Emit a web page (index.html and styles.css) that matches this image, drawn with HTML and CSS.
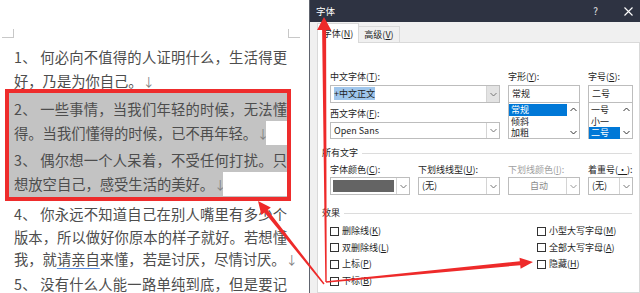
FILE: index.html
```html
<!DOCTYPE html>
<html lang="zh-CN">
<head>
    <meta charset="UTF-8">
    <meta name="viewport" content="width=device-width, initial-scale=1.0">
    <title>字体</title>
    <link rel="stylesheet" href="styles.css">
</head>
<body>
    <!-- документ слева -->
    <div class="doc">
        <div class="marks"><span class="mark-l"></span><span class="mark-r"></span></div>
        <p class="p1">1、 何必向不值得的人证明什么，生活得更好，乃是为你自己。<span class="pm">↓</span></p>
        <div class="sel">
            <p>2、 一些事情，当我们年轻的时候，无法懂得。当我们懂得的时候，已不再年轻。<span class="pm">↓</span><span class="eol"></span></p>
            <p class="p3">3、 偶尔想一个人呆着，不受任何打扰。只想放空自己，感受生活的美好。<span class="pm">↓</span><span class="eol"></span></p>
        </div>
        <p class="p4">4、 你永远不知道自己在别人嘴里有多少个版本，所以做好你原本的样子就好。若想懂我，就<span class="spell">请亲自</span>来懂，若是讨厌，尽情讨厌。<span class="pm">↓</span></p>
        <p class="p5">5、 没有什么人能一路单纯到底，但是要记</p>
    </div>

    <!-- диалог шрифта -->
    <div class="dialog">
        <div class="titlebar">
            <span class="title">字体</span>
            <span class="tbtn">?</span>
            <span class="tbtn close">
                <svg width="9" height="9" viewBox="0 0 9 9"><path d="M0.5 0.5L8.5 8.5M8.5 0.5L0.5 8.5" stroke="#fff" stroke-width="1.1"/></svg>
            </span>
        </div>
        <div class="tabs">
            <span class="tab active">字体(<u>N</u>)</span>
            <span class="tab">高级(<u>V</u>)</span>
        </div>
        <div class="panel">
            <div class="fontgrid">
                <div class="col">
                    <div class="lbl">中文字体(<u>T</u>):</div>
                    <div class="combo focus">
                        <span class="val"><span class="hl">+中文正文</span></span>
                        <span class="arr"><svg width="7" height="5" viewBox="0 0 7 5"><polyline points="0.5,1 3.5,4 6.5,1" fill="none" stroke="#777" stroke-width="1"/></svg></span>
                    </div>
                    <div class="lbl lbl2">西文字体(<u>F</u>):</div>
                    <div class="combo short">
                        <span class="val">Open Sans</span>
                        <span class="arr"><svg width="7" height="5" viewBox="0 0 7 5"><polyline points="0.5,1 3.5,4 6.5,1" fill="none" stroke="#777" stroke-width="1"/></svg></span>
                    </div>
                </div>
                <div class="col">
                    <div class="lbl">字形(<u>Y</u>):</div>
                    <div class="input">常规</div>
                    <div class="list">
                        <div class="items">
                            <div class="item on">常规</div>
                            <div class="item">倾斜</div>
                            <div class="item">加粗</div>
                        </div>
                        <div class="sbar">
                            <svg width="7" height="5" viewBox="0 0 7 5"><polyline points="0.5,4 3.5,1 6.5,4" fill="none" stroke="#333" stroke-width="1"/></svg>
                            <svg width="7" height="5" viewBox="0 0 7 5"><polyline points="0.5,1 3.5,4 6.5,1" fill="none" stroke="#333" stroke-width="1"/></svg>
                        </div>
                    </div>
                </div>
                <div class="col">
                    <div class="lbl">字号(<u>S</u>):</div>
                    <div class="input">二号</div>
                    <div class="list">
                        <div class="items">
                            <div class="item">一号</div>
                            <div class="item">小一</div>
                            <div class="item on">二号</div>
                        </div>
                        <div class="sbar">
                            <svg width="7" height="5" viewBox="0 0 7 5"><polyline points="0.5,4 3.5,1 6.5,4" fill="none" stroke="#333" stroke-width="1"/></svg>
                            <svg width="7" height="5" viewBox="0 0 7 5"><polyline points="0.5,1 3.5,4 6.5,1" fill="none" stroke="#333" stroke-width="1"/></svg>
                        </div>
                    </div>
                </div>
            </div>

            <div class="group">所有文字</div>
            <div class="attrs">
                <div class="lbl">字体颜色(<u>C</u>):</div>
                <div class="lbl">下划线线型(<u>U</u>):</div>
                <div class="lbl off">下划线颜色(<u>I</u>):</div>
                <div class="lbl">着重号(<u>·</u>):</div>
                <div class="combo">
                    <span class="swatch"></span>
                    <span class="arr"><svg width="7" height="5" viewBox="0 0 7 5"><polyline points="0.5,1 3.5,4 6.5,1" fill="none" stroke="#777" stroke-width="1"/></svg></span>
                </div>
                <div class="combo">
                    <span class="val">(无)</span>
                    <span class="arr"><svg width="7" height="5" viewBox="0 0 7 5"><polyline points="0.5,1 3.5,4 6.5,1" fill="none" stroke="#777" stroke-width="1"/></svg></span>
                </div>
                <div class="combo disabled">
                    <span class="val">自动</span>
                    <span class="arr"><svg width="7" height="5" viewBox="0 0 7 5"><polyline points="0.5,1 3.5,4 6.5,1" fill="none" stroke="#999" stroke-width="1"/></svg></span>
                </div>
                <div class="combo">
                    <span class="val">(无)</span>
                    <span class="arr"><svg width="7" height="5" viewBox="0 0 7 5"><polyline points="0.5,1 3.5,4 6.5,1" fill="none" stroke="#777" stroke-width="1"/></svg></span>
                </div>
            </div>

            <div class="group effects-title">效果</div>
            <div class="effects">
                <label class="chk"><span class="box"></span>删除线(<u>K</u>)</label>
                <label class="chk"><span class="box"></span>双删除线(<u>L</u>)</label>
                <label class="chk"><span class="box"></span>上标(<u>P</u>)</label>
                <label class="chk"><span class="box"></span>下标(<u>B</u>)</label>
                <label class="chk"><span class="box"></span>小型大写字母(<u>M</u>)</label>
                <label class="chk"><span class="box"></span>全部大写字母(<u>A</u>)</label>
                <label class="chk"><span class="box"></span>隐藏(<u>H</u>)</label>
            </div>
        </div>
    </div>

    <!-- красные стрелки поверх -->
    <svg class="arrows" width="640" height="293" viewBox="0 0 640 293">
        <polygon points="326.7,282 326.1,30 331.1,30 324,17 317.1,30 322.1,30 325.3,282" fill="#ee2a2a"/>
        <polygon points="325.93,281.3 519.87,261.26 519.53,257.78 533,262 520.59,268.72 520.25,265.24 326.07,282.7" fill="#ee2a2a"/>
        <polygon points="324.55,283.56 267.67,209.93 270.8,207.44 258,201 261.4,214.92 264.53,212.43 323.45,284.44" fill="#ee2a2a"/>
    </svg>
</body>
</html>
```

FILE: styles.css
```css
body {
    margin: 0;
    width: 640px;
    height: 293px;
    overflow: hidden;
    display: flex;
    position: relative;
    background-color: #fff;
    font-family: "Noto Sans CJK SC", "Noto Sans", sans-serif;
}

/* document */

.doc {
    width: 309px;
    height: 293px;
    flex: none;
    box-sizing: border-box;
    padding: 0 22px 0 14px;
    overflow: hidden;
    color: #4d4d4d;
    font-size: 14.3px;
    line-height: 24px;
}

.marks {
    display: flex;
    justify-content: space-between;
    margin: 29px -13px 0 -12px;
}

.mark-l, .mark-r {
    width: 11px;
    height: 8px;
    border-bottom: 1px solid #c8c8c8;
}

.mark-l {
    border-right: 1px solid #c8c8c8;
}

.mark-r {
    border-left: 1px solid #c8c8c8;
}

.doc p {
    margin: 0;
    text-align: justify;
}

.doc .p1 {
    margin-top: 7px;
}

.pm {
    display: inline-block;
    width: 9px;
    margin-right: -9px;
    font-size: 12px;
    color: #808080;
}

.sel {
    margin: -5px -4px 0 -9px;
    padding: 4px 0 0 5px;
    border: 4px solid #ee2c2c;
    background-color: #c3c3c3;
}

.sel p {
    overflow: hidden;
}

.sel .pm {
    margin-right: 0;
}

.sel .p3 {
    margin-top: 2px;
}

.eol {
    display: inline-block;
    width: 300px;
    height: 24px;
    margin-right: -300px;
    vertical-align: top;
    background-color: #fff;
}

.doc .p4 {
    margin-top: 2px;
    line-height: 22.5px;
}

.doc .p5 {
    margin-top: 0;
    text-align-last: justify;
}

.spell {
    text-decoration: underline;
    text-decoration-color: #5b8ad6;
    text-underline-offset: 3px;
}

/* dialog */

.dialog {
    flex: none;
    width: 331px;
    box-sizing: border-box;
    display: flex;
    flex-direction: column;
    overflow: hidden;
    background-color: #f0f0f0;
    border-left: 1px solid #60646e;
    color: #1e1e1e;
    font-size: 9px;
    line-height: 14px;
}

.titlebar {
    height: 22px;
    flex: none;
    display: flex;
    align-items: center;
    padding-left: 6px;
    margin-right: -5px;
    background-color: #2e3342;
    color: #fff;
    font-size: 9.5px;
}

.title {
    flex: 1;
}

.tbtn {
    width: 33px;
    height: 22px;
    display: flex;
    align-items: center;
    justify-content: center;
    font-size: 10px;
    color: #e8e8e8;
}

.tabs {
    height: 20px;
    flex: none;
    display: flex;
    align-items: flex-end;
    padding-left: 7px;
}

.tab {
    width: 41px;
    height: 16px;
    box-sizing: border-box;
    text-align: center;
    border: 1px solid #d9d9d9;
    border-bottom: none;
    border-left: none;
    line-height: 15px;
}

.tab.active {
    width: 42px;
    height: 20px;
    margin-bottom: -1px;
    border-left: 1px solid #d9d9d9;
    background-color: #fff;
    line-height: 20px;
    position: relative;
}

.panel {
    flex: 1;
    margin-left: 7px;
    padding: 27px 0 0 4px;
    background-color: #fff;
    border: 1px solid #d9d9d9;
}

.fontgrid {
    display: grid;
    grid-template-columns: 170px 72px 45px;
    column-gap: 8px;
    margin-left: 8px;
}

.col {
    display: flex;
    flex-direction: column;
}

.lbl {
    height: 14px;
    margin-bottom: 1px;
    white-space: nowrap;
}

.lbl2 {
    margin-top: 4px;
}

.lbl.off {
    color: #a0a0a0;
}

.combo, .input {
    height: 18px;
    box-sizing: border-box;
    border: 1px solid #bdbdbd;
    background-color: #fff;
}

.combo {
    display: flex;
}

.combo.short {
    height: 17px;
}

.combo .val {
    flex: 1;
    padding-left: 3px;
    line-height: 16px;
    white-space: nowrap;
}

.hl {
    background-color: #9fc6ec;
}

.combo .arr {
    width: 12px;
    display: flex;
    align-items: center;
    justify-content: center;
    border-left: 1px solid #d4d4d4;
}

.combo.focus .arr {
    background-color: #e3e3e3;
}

.combo.disabled .val {
    text-align: center;
    color: #8a8a8a;
}

.swatch {
    flex: 1;
    margin: 2px;
    background-color: #646464;
}

.input {
    padding-left: 3px;
    line-height: 16px;
}

.list {
    height: 36px;
    box-sizing: border-box;
    display: flex;
    border: 1px solid #bdbdbd;
    border-top: none;
}

.items {
    flex: 1;
    padding-top: 1px;
}

.item {
    height: 11.5px;
    line-height: 11.5px;
    padding-left: 2px;
}

.item.on {
    background-color: #0078d7;
    color: #fff;
}

.sbar {
    width: 12px;
    display: flex;
    flex-direction: column;
    align-items: center;
    justify-content: space-between;
    padding: 4px 0 3px;
}

.group {
    display: flex;
    align-items: center;
    gap: 4px;
    height: 14px;
    margin: 7px 7px 0 0;
}

.group::after {
    content: "";
    flex: 1;
    border-top: 1px solid #dcdcdc;
}

.attrs {
    display: grid;
    grid-template-columns: 80px 82px 72px 45px;
    column-gap: 8px;
    margin: 3px 0 0 8px;
}

.attrs .lbl {
    margin-bottom: 0;
}

.effects-title {
    margin-top: 11px;
}

.effects {
    display: grid;
    grid-auto-flow: column;
    grid-template-columns: 207px auto;
    grid-template-rows: repeat(4, 16.6px);
    margin: 3px 0 0 8px;
}

.chk {
    display: flex;
    align-items: center;
    white-space: nowrap;
}

.box {
    width: 9px;
    height: 9px;
    box-sizing: border-box;
    border: 1px solid #333;
    margin-right: 3px;
}

.arrows {
    position: absolute;
    top: 0;
    left: 0;
    pointer-events: none;
}
```
